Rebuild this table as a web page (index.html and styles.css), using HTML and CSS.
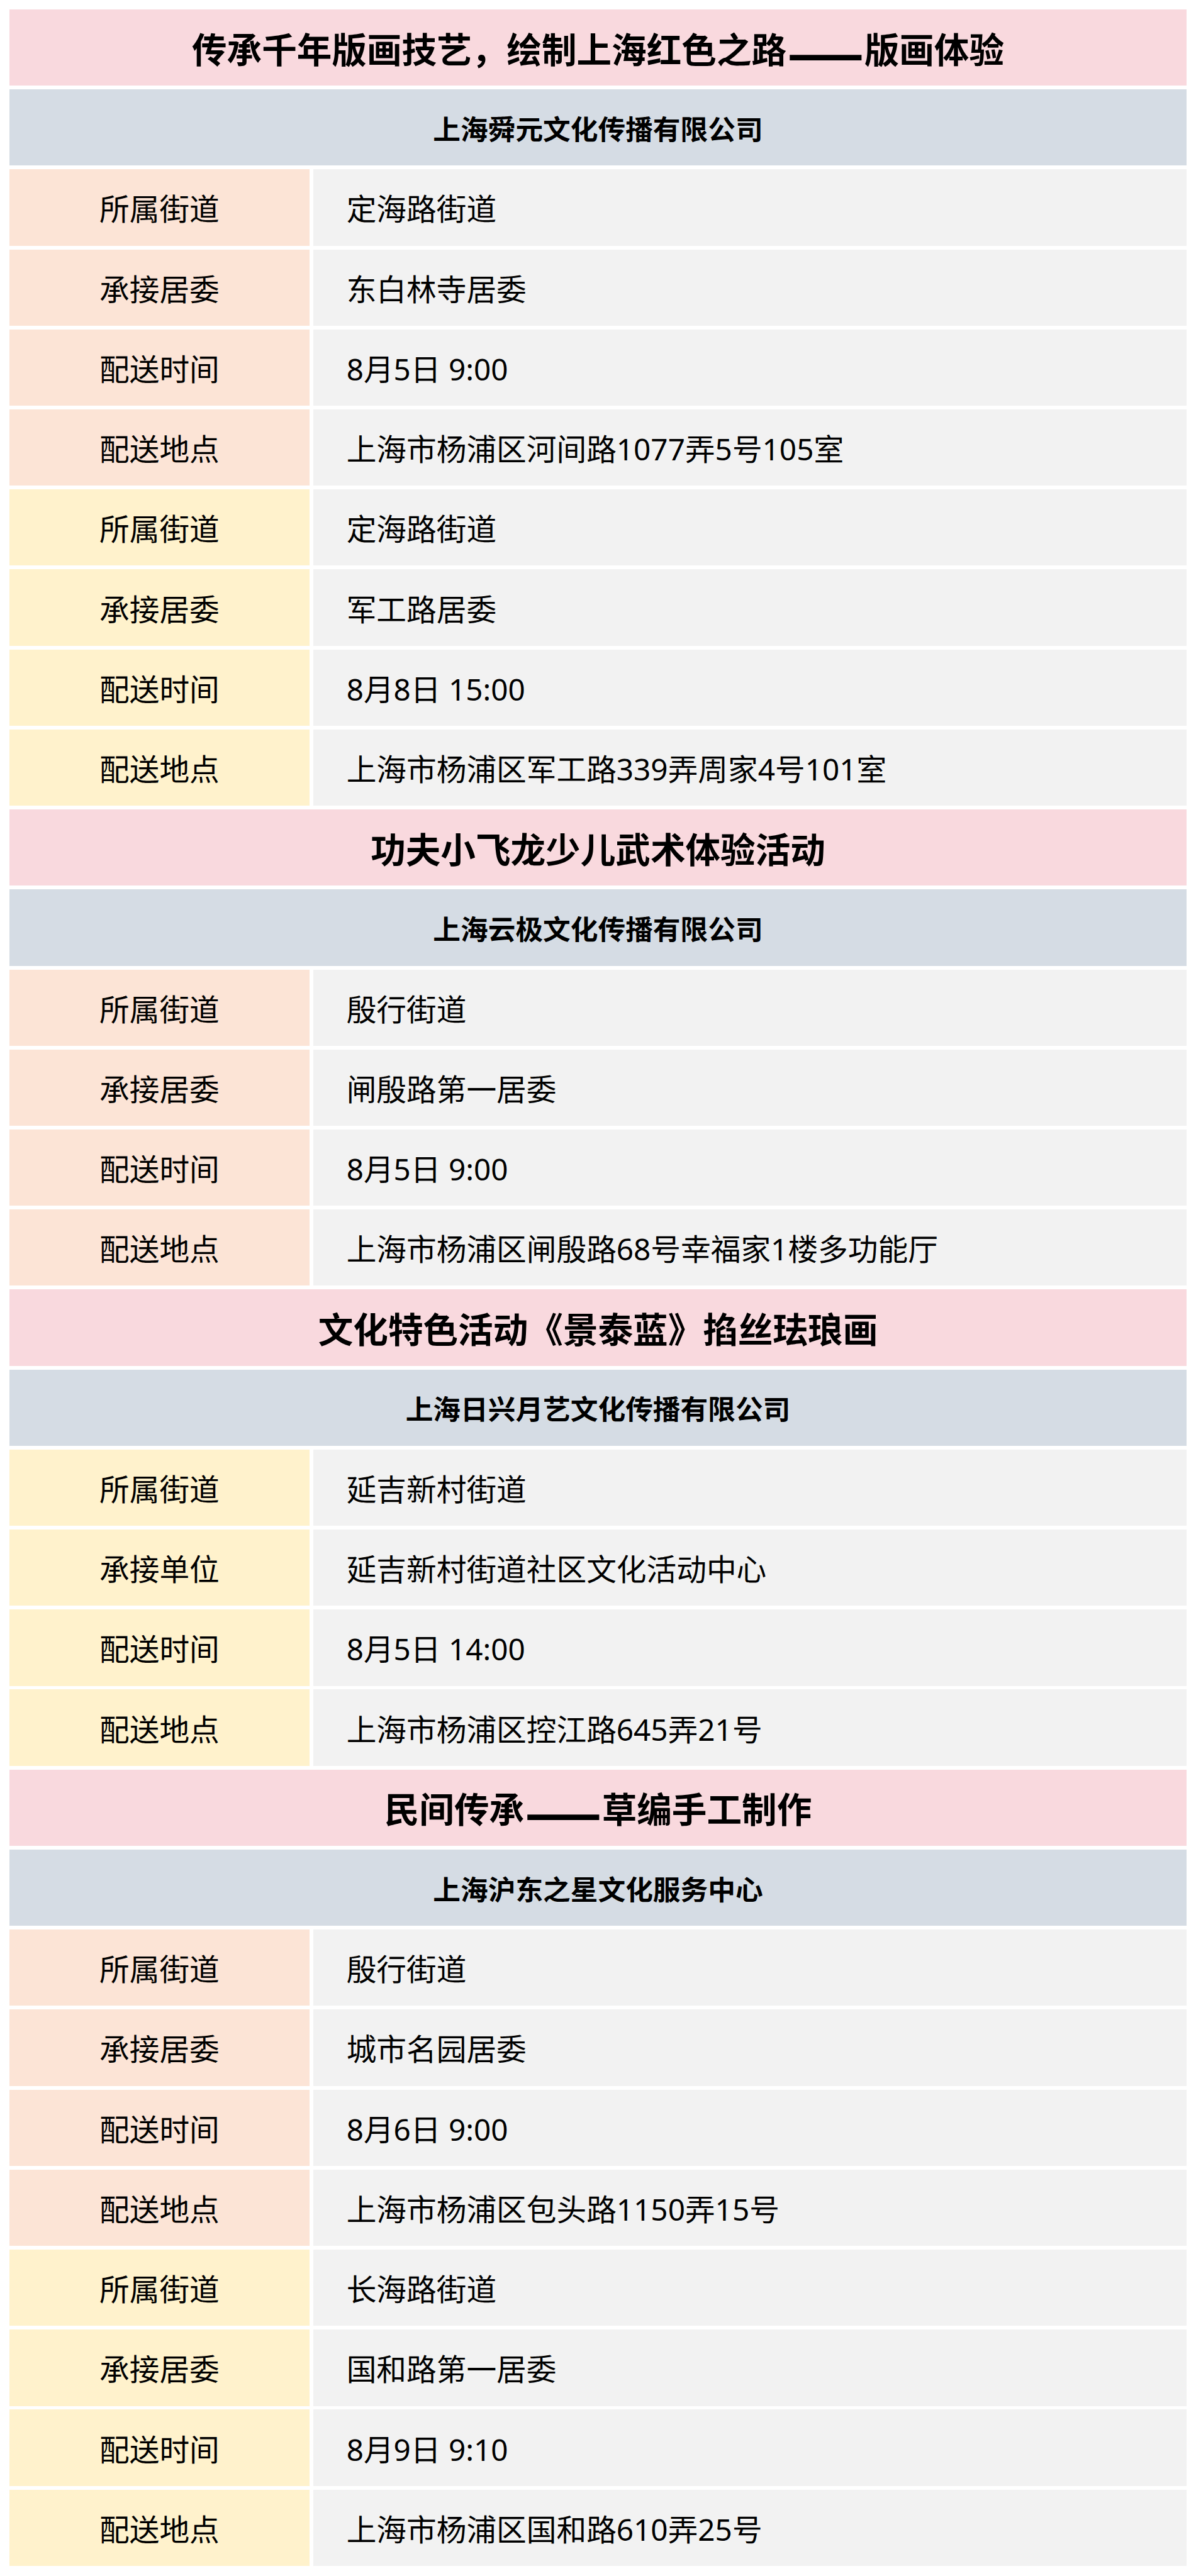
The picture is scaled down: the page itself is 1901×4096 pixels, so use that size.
FILE: index.html
```html
<!DOCTYPE html>
<html lang="zh-CN">
<head>
<meta charset="utf-8">
<title>配送活动</title>
<link rel="stylesheet" href="styles.css">
</head>
<body>
<div class="sheet">
  <div class="title">传承千年版画技艺，绘制上海红色之路<span class="dash">——</span>版画体验</div>
  <div class="company">上海舜元文化传播有限公司</div>
  <div class="key peach">所属街道</div><div class="val">定海路街道</div>
  <div class="key peach">承接居委</div><div class="val">东白林寺居委</div>
  <div class="key peach">配送时间</div><div class="val">8月5日 9:00</div>
  <div class="key peach">配送地点</div><div class="val">上海市杨浦区河间路1077弄5号105室</div>
  <div class="key yellow">所属街道</div><div class="val">定海路街道</div>
  <div class="key yellow">承接居委</div><div class="val">军工路居委</div>
  <div class="key yellow">配送时间</div><div class="val">8月8日 15:00</div>
  <div class="key yellow">配送地点</div><div class="val">上海市杨浦区军工路339弄周家4号101室</div>

  <div class="title">功夫小飞龙少儿武术体验活动</div>
  <div class="company">上海云极文化传播有限公司</div>
  <div class="key peach">所属街道</div><div class="val">殷行街道</div>
  <div class="key peach">承接居委</div><div class="val">闸殷路第一居委</div>
  <div class="key peach">配送时间</div><div class="val">8月5日 9:00</div>
  <div class="key peach">配送地点</div><div class="val">上海市杨浦区闸殷路68号幸福家1楼多功能厅</div>

  <div class="title">文化特色活动《景泰蓝》掐丝珐琅画</div>
  <div class="company">上海日兴月艺文化传播有限公司</div>
  <div class="key yellow">所属街道</div><div class="val">延吉新村街道</div>
  <div class="key yellow">承接单位</div><div class="val">延吉新村街道社区文化活动中心</div>
  <div class="key yellow">配送时间</div><div class="val">8月5日 14:00</div>
  <div class="key yellow">配送地点</div><div class="val">上海市杨浦区控江路645弄21号</div>

  <div class="title">民间传承<span class="dash">——</span>草编手工制作</div>
  <div class="company">上海沪东之星文化服务中心</div>
  <div class="key peach">所属街道</div><div class="val">殷行街道</div>
  <div class="key peach">承接居委</div><div class="val">城市名园居委</div>
  <div class="key peach">配送时间</div><div class="val">8月6日 9:00</div>
  <div class="key peach">配送地点</div><div class="val">上海市杨浦区包头路1150弄15号</div>
  <div class="key yellow">所属街道</div><div class="val">长海路街道</div>
  <div class="key yellow">承接居委</div><div class="val">国和路第一居委</div>
  <div class="key yellow">配送时间</div><div class="val">8月9日 9:10</div>
  <div class="key yellow">配送地点</div><div class="val">上海市杨浦区国和路610弄25号</div>
</div>
</body>
</html>
```

FILE: styles.css
```css
html, body {
  margin: 0;
  padding: 0;
  background: #ffffff;
}

.sheet {
  padding: 14.9px;
  display: grid;
  grid-template-columns: 477.1px 1fr;
  grid-auto-rows: 121.27px;
  gap: 5.96px;
  font-family: "Noto Sans CJK SC", "Noto Sans", sans-serif;
  color: #000000;
}

.title,
.company {
  grid-column: 1 / span 2;
  display: flex;
  align-items: center;
  justify-content: center;
  font-weight: 700;
  white-space: nowrap;
}

.title {
  background: #f9d9de;
  font-size: 55.6px;
}

.dash {
  display: inline-block;
  transform: translateY(0.04em) scale(1.28, 1.7);
  margin: 0 0.26em;
}

.company {
  background: #d5dce4;
  font-size: 43.7px;
}

.key,
.val {
  display: flex;
  align-items: center;
  font-size: 47.7px;
  white-space: nowrap;
}

.key {
  justify-content: center;
}

.peach {
  background: #fce4d6;
}

.yellow {
  background: #fff2cc;
}

.val {
  background: #f2f2f2;
  padding-left: 52.7px;
  font-family: "Noto Sans", "Noto Sans CJK SC", sans-serif;
}
```
